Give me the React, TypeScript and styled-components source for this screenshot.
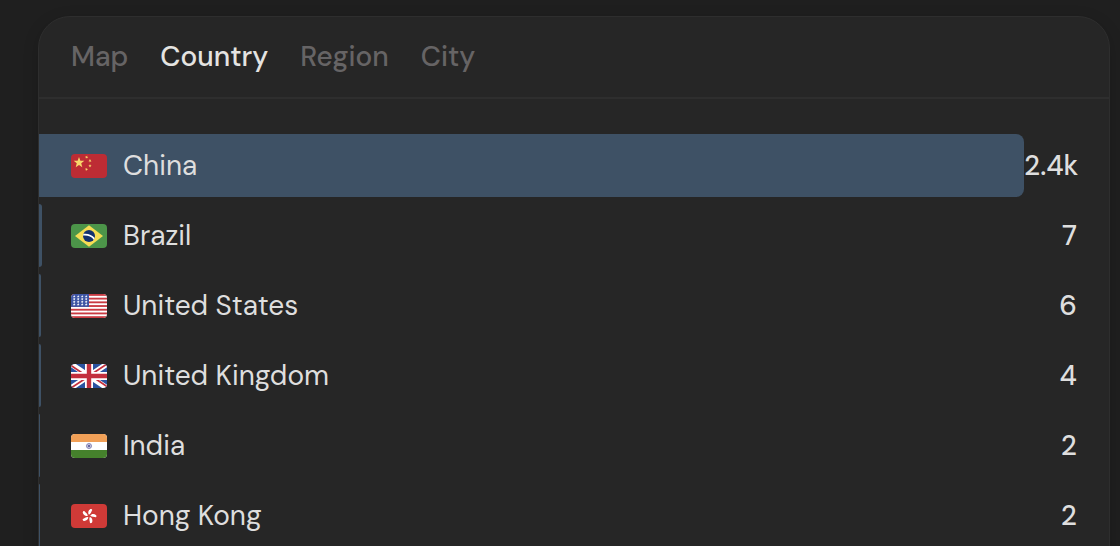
import { useState } from "react";
import type { ReactNode } from "react";
import styled, { createGlobalStyle } from "styled-components";

const GlobalStyle = createGlobalStyle`
  * { box-sizing: border-box; }
  body {
    margin: 0;
    background: #1f1f1f;
    color: #dedede;
    font-family: "DM Sans", Inter, "Liberation Sans", sans-serif;
    font-size: 28px;
    line-height: 36px;
  }
`;

const Page = styled.main`
  min-height: 100vh;
  padding: 16px 10px 0 38px;
`;

const Card = styled.section`
  padding-bottom: 32px;
  background: #262626;
  border: 1px solid #2e2e2e;
  border-radius: 32px 32px 0 0;
  box-shadow: 0 4px 16px rgba(0, 0, 0, 0.16);
`;

const Tabs = styled.div`
  display: flex;
  gap: 32px;
  padding: 22px 32px;
  border-bottom: 2px solid #2e2e2e;
`;

const Tab = styled.button<{ $active: boolean }>`
  padding: 0;
  border: 0;
  background: none;
  font: inherit;
  font-weight: 500;
  color: ${(p) => (p.$active ? "#e4e3e1" : "#666465")};
  cursor: pointer;
`;

const List = styled.ul`
  display: grid;
  gap: 7px;
  margin: 0;
  padding: 35px 0 0;
  list-style: none;
`;

const Row = styled.li`
  display: flex;
  align-items: center;
  height: 63px;
  padding-right: 32px;
`;

const Track = styled.div`
  flex: 1;
  display: grid;
  align-items: center;
  height: 100%;
`;

const Bar = styled.div`
  grid-area: 1 / 1;
  height: 100%;
  background: #3e5165;
  border-radius: 0 8px 8px 0;
`;

const Label = styled.div`
  grid-area: 1 / 1;
  display: flex;
  align-items: center;
  gap: 16px;
  padding-left: 32px;
`;

const Flag = styled.svg`
  flex: none;
  width: 36px;
  height: 24px;
  border-radius: 4px;
`;

const Value = styled.span`
  width: 53px;
  font-weight: 500;
  text-align: right;
  white-space: nowrap;
`;

const star = (cx: number, cy: number, r: number, turn = 0) =>
  Array.from({ length: 10 }, (_, i) => {
    const a = ((i * 36 - 90 + turn) * Math.PI) / 180;
    const d = i % 2 ? r * 0.42 : r;
    return `${(cx + d * Math.cos(a)).toFixed(2)},${(cy + d * Math.sin(a)).toFixed(2)}`;
  }).join(" ");

const china = (
  <>
    <rect width="36" height="24" fill="#bd2c34" />
    <g fill="#f8d66b">
      <polygon points={star(8, 8.6, 5.6)} />
      <polygon points={star(15.6, 3.2, 1.7, 20)} />
      <polygon points={star(19, 6.8, 1.7, 40)} />
      <polygon points={star(19, 11.8, 1.7)} />
      <polygon points={star(15.5, 15.4, 1.7, 20)} />
    </g>
  </>
);

const brazil = (
  <>
    <rect width="36" height="24" fill="#4c9549" />
    <path d="M18 1.2 32 12 18 22.8 4 12Z" fill="#f6dd54" />
    <circle cx="18" cy="12" r="6" fill="#13306f" />
    <path d="M12.4 9.8c4.6-.6 8.8 1 11.3 4.2l-.9 1.7c-2.4-3.2-6.2-4.6-10.8-4.1Z" fill="#fff" />
  </>
);

const usa = (
  <>
    <rect width="36" height="24" fill="#fff" />
    {[0, 3.7, 7.4, 11.1, 14.8, 18.5, 22.2].map((y) => (
      <rect key={y} y={y} width="36" height="1.85" fill="#c93a42" />
    ))}
    <rect width="18" height="12.9" fill="#3f56a5" />
    {[2.4, 5.1, 7.8, 10.5].map((y) =>
      [3.2, 7.2, 11.2, 15.2].map((x) => (
        <polygon key={`${x}-${y}`} points={star(x, y, 1.4)} fill="#fff" />
      )),
    )}
  </>
);

const uk = (
  <>
    <rect width="36" height="24" fill="#2a52a0" />
    <path d="M0 0 36 24M36 0 0 24" stroke="#fff" strokeWidth="5.4" />
    <path d="M0 1.5 16 12.2M20 11.8 36 22.5M36 0 19 11.3M17 12.7 0 24" stroke="#c32f3d" strokeWidth="1.8" />
    <path d="M18 0V24M0 12H36" stroke="#fff" strokeWidth="8" />
    <path d="M18 0V24M0 12H36" stroke="#c32f3d" strokeWidth="4.4" />
  </>
);

const india = (
  <>
    <rect width="36" height="24" fill="#fff" />
    <rect width="36" height="8" fill="#f1a057" />
    <rect y="16" width="36" height="8" fill="#45812c" />
    <g fill="none" stroke="#5a5a9c" strokeWidth=".8">
      <circle cx="18" cy="12" r="2.7" strokeOpacity=".6" />
      <path d="M18 9.3V14.7M15.3 12H20.7M16.4 10.4 19.6 13.6M19.6 10.4 16.4 13.6" />
    </g>
  </>
);

const hongKong = (
  <>
    <rect width="36" height="24" fill="#cf3a37" />
    <g fill="#fff">
      {[0, 72, 144, 216, 288].map((a) => (
        <path
          key={a}
          d="M17.700 10.800C16 9.400 15.900 6.600 17.900 4.800c.8-.4 1.900-.1 2 .6-.7 1.600-.3 3.700-2.200 5.400Z"
          transform={`rotate(${a + 12} 18 12)`}
        />
      ))}
    </g>
  </>
);

const countries: { name: string; visitors: number; shown: string; flag: ReactNode }[] = [
  { name: "China", visitors: 2400, shown: "2.4k", flag: china },
  { name: "Brazil", visitors: 7, shown: "7", flag: brazil },
  { name: "United States", visitors: 6, shown: "6", flag: usa },
  { name: "United Kingdom", visitors: 4, shown: "4", flag: uk },
  { name: "India", visitors: 2, shown: "2", flag: india },
  { name: "Hong Kong", visitors: 2, shown: "2", flag: hongKong },
];

const tabs = ["Map", "Country", "Region", "City"];
const most = Math.max(...countries.map((c) => c.visitors));

export default function App() {
  const [active, setActive] = useState("Country");
  return (
    <>
      <GlobalStyle />
      <Page>
        <Card>
          <Tabs role="tablist">
            {tabs.map((t) => (
              <Tab
                key={t}
                type="button"
                role="tab"
                aria-selected={t === active}
                $active={t === active}
                onClick={() => setActive(t)}
              >
                {t}
              </Tab>
            ))}
          </Tabs>
          <List>
            {countries.map((c) => (
              <Row key={c.name}>
                <Track>
                  <Bar style={{ width: `${(c.visitors / most) * 100}%` }} />
                  <Label>
                    <Flag viewBox="0 0 36 24" aria-hidden="true">
                      {c.flag}
                    </Flag>
                    {c.name}
                  </Label>
                </Track>
                <Value>{c.shown}</Value>
              </Row>
            ))}
          </List>
        </Card>
      </Page>
    </>
  );
}
